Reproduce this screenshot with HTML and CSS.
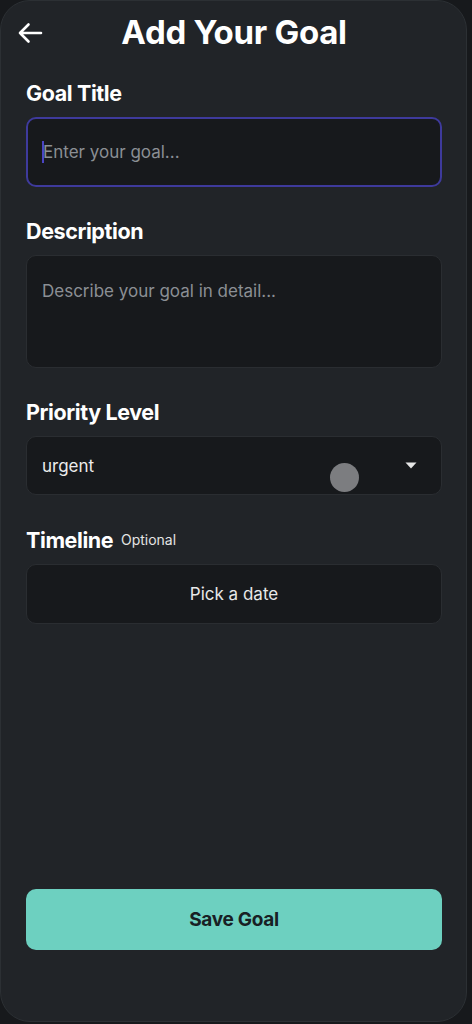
FILE: index.html
```html
<!DOCTYPE html>
<html lang="en">
<head>
<meta charset="utf-8">
<title>Add Your Goal</title>
<link rel="stylesheet" href="styles.css">
</head>
<body>
<div class="card">
  <header class="header">
    <button class="back" aria-label="Back">
      <svg width="26" height="22" viewBox="0 0 26 22" fill="none" stroke="#ffffff" stroke-width="2.6" stroke-linecap="round" stroke-linejoin="round"><path d="M24 11H3M11.5 2.5L3 11l8.5 8.5"/></svg>
    </button>
    <h1 class="title">Add Your Goal</h1>
    <span class="spacer-icon"></span>
  </header>

  <form class="form">
    <div class="field">
      <label class="label">Goal Title</label>
      <div class="input input-focus"><span class="caret"></span><span class="placeholder">Enter your goal...</span></div>
    </div>
    <div class="field">
      <label class="label">Description</label>
      <div class="input textarea"><span class="placeholder">Describe your goal in detail...</span></div>
    </div>
    <div class="field">
      <label class="label">Priority Level</label>
      <div class="input select">
        <span class="value">urgent</span>
        <svg class="chev" width="12" height="7" viewBox="0 0 12 7"><path d="M0.5 0.5h11L6 6.5z" fill="#e6e6e6"/></svg>
        <span class="touch"></span>
      </div>
    </div>
    <div class="field">
      <label class="label">Timeline <span class="optional">Optional</span></label>
      <div class="input datebtn">Pick a date</div>
    </div>
  </form>

  <div class="grow"></div>
  <button class="save">Save Goal</button>
</div>
</body>
</html>
```
FILE: styles.css
```css
* { box-sizing: border-box; }
html, body { margin: 0; padding: 0; }
body {
  background: #17191c;
  font-family: Inter, "Noto Sans", sans-serif;
  color: #ffffff;
  width: 472px;
  height: 1024px;
  overflow: hidden;
}
.card {
  width: 467px;
  height: 1022px;
  background: #212428;
  border: 1px solid #2c3034;
  border-radius: 30px;
  display: flex;
  flex-direction: column;
  padding: 0 24px 71px 25px;
}
.header {
  height: 65px;
  margin: 0 -8px;
  display: grid;
  grid-template-columns: 40px 1fr 40px;
  align-items: center;
}
.back {
  background: none;
  border: 0;
  padding: 0;
  width: 28px;
  height: 26px;
  display: flex;
  align-items: center;
  justify-content: center;
  margin-left: -2px;
  margin-bottom: 2px;
  cursor: pointer;
}
.title {
  margin: 0;
  text-align: center;
  font-size: 33px;
  font-weight: 700;
  letter-spacing: -0.3px;
  line-height: 40px;
  color: #ffffff;
  padding-bottom: 4px;
}
.form {
  display: flex;
  flex-direction: column;
  gap: 32px;
  padding-top: 15px;
}
.field {
  display: flex;
  flex-direction: column;
  gap: 11px;
}
.label {
  font-size: 21.5px;
  font-weight: 700;
  line-height: 25px;
  letter-spacing: -0.4px;
  color: #ffffff;
}
.optional {
  font-size: 14px;
  font-weight: 400;
  letter-spacing: 0;
  color: #e4e4e4;
  margin-left: 3px;
  vertical-align: 3px;
}
.input {
  background: #17191c;
  border: 1px solid #2a2d31;
  border-radius: 10px;
  font-size: 17px;
  color: #e6e6e6;
  display: flex;
  align-items: center;
  padding: 0 15px;
  position: relative;
}
.input-focus {
  height: 70px;
  border: 2px solid #3e3a9c;
  padding-left: 14px;
}
.caret {
  width: 2px;
  height: 22px;
  background: #4b45c4;
  margin-right: -1px;
}
.placeholder { color: #8b8f94; }
.textarea {
  height: 113px;
  align-items: flex-start;
  padding-top: 25px;
}
.select {
  height: 59px;
  justify-content: space-between;
  padding-right: 24px;
}
.value { color: #ececec; }
.chev { display: block; }
.touch {
  position: absolute;
  left: 303px;
  top: 26px;
  width: 29px;
  height: 29px;
  border-radius: 50%;
  background: #7c7d80;
}
.datebtn {
  height: 60px;
  justify-content: center;
  color: #e8e8e8;
}
.grow { flex: 1; }
.save {
  height: 61px;
  border: 0;
  border-radius: 10px;
  background: #6dd0c0;
  color: #182024;
  font-family: Inter, "Noto Sans", sans-serif;
  font-size: 19px;
  font-weight: 700;
  letter-spacing: -0.3px;
  cursor: pointer;
}
```
